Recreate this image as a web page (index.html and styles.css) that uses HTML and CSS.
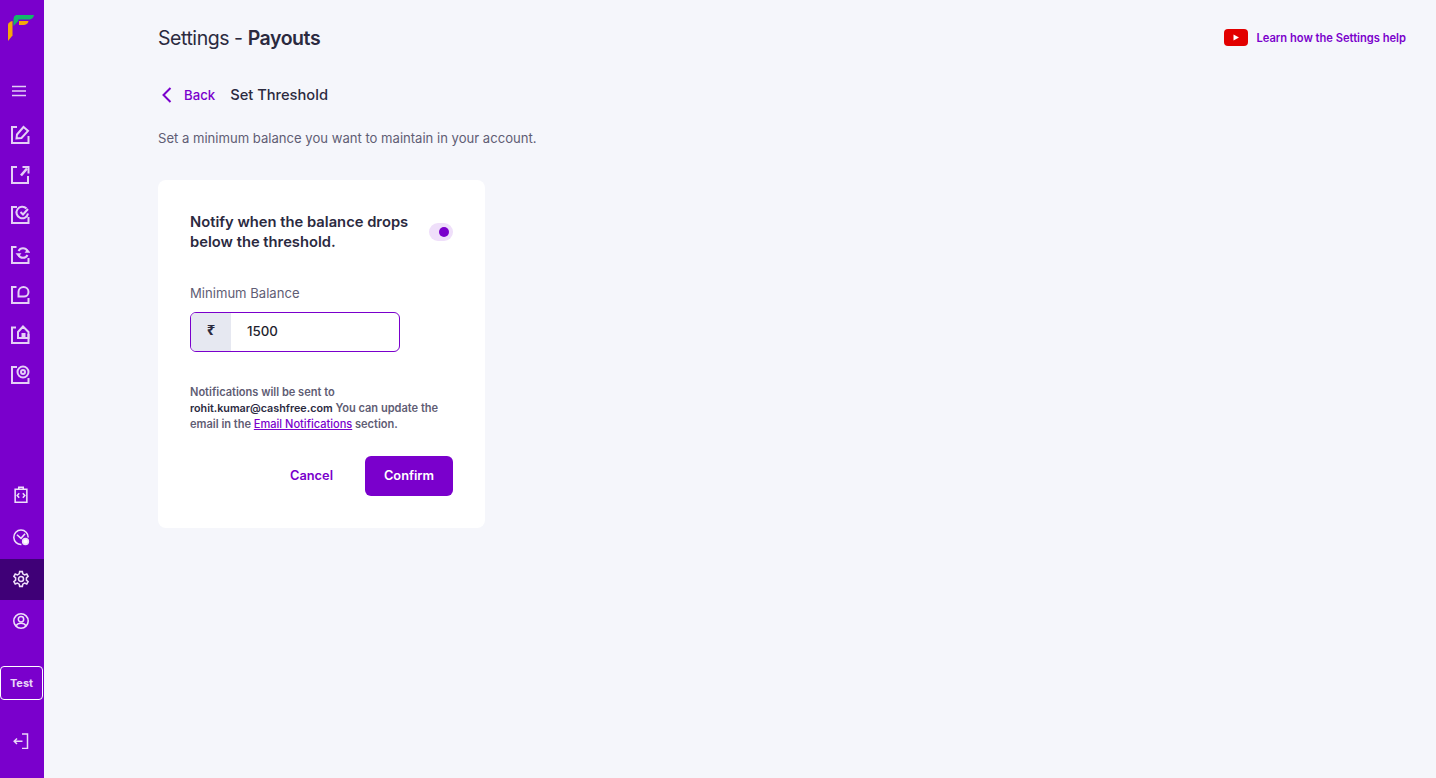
FILE: index.html
```html
<!DOCTYPE html>
<html lang="en">
<head>
<meta charset="utf-8">
<title>Settings - Payouts</title>
<link rel="stylesheet" href="styles.css">
</head>
<body>
<div class="app">
  <aside class="sidebar">
    <div class="logo">
      <svg width="26" height="26" viewBox="0 0 26 26"><path d="M5.500 11V4Q5.500 1 8 0H26Q25.500 3.500 22 4.500H10.300V6Z" fill="#12b76a"/><path d="M0 9.500Q0.500 7 4.500 6V20.500L0 26Z" fill="#f5a70b"/><path d="M11 6H20.500Q20 9.500 16 10H11Z" fill="#f5a70b"/></svg>
    </div>
    <div class="menu-btn">
      <svg width="14" height="12" viewBox="0 0 14 12"><path d="M0 1.500H14M0 6H14M0 10.500H14" stroke="#e4cdf5" stroke-width="1.400"/></svg>
    </div>
    <nav class="nav-top">
      <a class="nav-item"><svg class="nav-icon" viewBox="0 0 20 20"><path d="M7 2H2V18H18.500V11"/><path d="M6.500 13.500L7 9.500L13.500 2L18 5.800L11.500 13Z"/></svg></a>
      <a class="nav-item"><svg class="nav-icon" viewBox="0 0 20 20"><path d="M7 2H2V18H18V11"/><path d="M12.500 2H18.500V8.500"/><path d="M17 3.500L11 10.500" stroke-width="2.600"/></svg></a>
      <a class="nav-item"><svg class="nav-icon" viewBox="0 0 20 20"><path d="M7 2H2V18H18.500V12"/><path d="M16.500 3.500A5.800 5.800 0 1 0 18 8.500"/><path d="M10.500 7L13 9.500L18 4"/></svg></a>
      <a class="nav-item"><svg class="nav-icon" viewBox="0 0 20 20"><path d="M6.500 2H2V18H18.500V13"/><path d="M8.500 6A5 5 0 0 1 17.500 6M17.500 10A5 5 0 0 1 8.500 10"/><path d="M15 7.500H20L17.500 4.500Z" fill="#e4d0f6" stroke-width="0.500"/><path d="M6 8.500H11L8.500 11.500Z" fill="#e4d0f6" stroke-width="0.500"/></svg></a>
      <a class="nav-item"><svg class="nav-icon" viewBox="0 0 20 20"><path d="M6.500 2H2V18H18.500V13"/><path d="M8.500 11.500V7A5 5 0 0 1 18.500 7A4.500 4.500 0 0 1 14 11.500Z"/></svg></a>
      <a class="nav-item"><svg class="nav-icon" viewBox="0 0 20 20"><path d="M6 2.500H2V18H18.500V9"/><path d="M8 13V7L13 1.500L18.500 7V13H14.500V9H12.500V13Z"/></svg></a>
      <a class="nav-item"><svg class="nav-icon" viewBox="0 0 20 20"><path d="M7 2H2V18H18.500V13"/><circle cx="13" cy="7" r="5.500"/><circle cx="13" cy="7" r="2"/></svg></a>
    </nav>
    <nav class="nav-bottom">
      <a class="nav-item-sm"><svg class="nav-icon-sm" viewBox="0 0 20 20"><path d="M3.500 3.500H16.500V18H3.500Z"/><path d="M7.500 3.500V1.500H12.500V3.500"/><path d="M8 8L5.800 10.500L8 13M12 8L14.200 10.500L12 13"/></svg></a>
      <a class="nav-item-sm"><svg class="nav-icon-sm" viewBox="0 0 20 20"><path d="M10.500 18.300A8 8 0 1 1 18 10.500"/><path d="M5.500 7.500L10 11.500L14.500 6.500"/><circle cx="15" cy="15" r="3.200" fill="#fff"/></svg></a>
      <a class="nav-item-sm active"><svg class="nav-icon-sm" viewBox="0 0 20 20"><circle cx="10" cy="10" r="2.800"/><path d="M8.500 1.800H11.500L12 4.300L14 5.400L16.400 4.500L17.900 7L16 8.800V11.200L17.900 13L16.400 15.500L14 14.600L12 15.700L11.500 18.200H8.500L8 15.700L6 14.600L3.600 15.500L2.100 13L4 11.200V8.800L2.100 7L3.600 4.500L6 5.400L8 4.300Z"/></svg></a>
      <a class="nav-item-sm"><svg class="nav-icon-sm" viewBox="0 0 20 20"><circle cx="10" cy="10" r="8"/><circle cx="10" cy="8" r="3"/><path d="M4.500 15.500Q6 12.500 10 12.500T15.500 15.500"/></svg></a>
    </nav>
    <div class="test-badge">Test</div>
    <a class="exit"><svg width="16" height="16" viewBox="0 0 16 16" fill="none" stroke="#e9d8f7" stroke-width="1.500"><path d="M9 1H14.500V15.500H9"/><path d="M1 8.200H9.500M4 5.500L1.200 8.200L4 11"/></svg></a>
  </aside>

  <main class="content">
    <header class="topbar">
      <h1 class="title">Settings - <strong>Payouts</strong></h1>
      <a class="help">
        <svg width="24" height="17" viewBox="0 0 24 17"><rect width="24" height="17" rx="4" fill="#e20000"/><path d="M9.500 5.500L15 8.500L9.500 11.500Z" fill="#fff"/></svg>
        <span>Learn how the Settings help</span>
      </a>
    </header>

    <div class="crumb">
      <a class="back">
        <svg width="10" height="16" viewBox="0 0 10 16" fill="none" stroke="#7a00cc" stroke-width="2"><path d="M8.500 1L1.500 8L8.500 15"/></svg>
        <span>Back</span>
      </a>
      <span class="crumb-title">Set Threshold</span>
    </div>

    <p class="intro">Set a minimum balance you want to maintain in your account.</p>

    <section class="card">
      <div class="notify">
        <div class="notify-text">Notify when the balance drops below the threshold.</div>
        <div class="toggle"><span class="knob"></span></div>
      </div>
      <label class="field-label">Minimum Balance</label>
      <div class="input">
        <span class="prefix">₹</span>
        <span class="value">1500</span>
      </div>
      <p class="note">Notifications will be sent to <b>rohit.kumar@cashfree.com</b> You can update the email in the <a class="note-link">Email Notifications</a> section.</p>
      <div class="actions">
        <button class="btn-text">Cancel</button>
        <button class="btn-primary">Confirm</button>
      </div>
    </section>
  </main>
</div>
</body>
</html>
```
FILE: styles.css
```css
* { box-sizing: border-box; }
html, body { margin: 0; height: 100%; }
body {
  background: #f5f6fb;
  font-family: "Inter", "Liberation Sans", sans-serif;
  color: #2b2a3f;
  overflow: hidden;
}
.app { display: flex; height: 778px; }
.sidebar {
  width: 44px;
  flex: none;
  background: #7a00cc;
  display: flex;
  flex-direction: column;
  align-items: center;
}
.logo { height: 26px; margin-top: 15px; align-self: flex-start; margin-left: 8px; line-height: 0; }
.menu-btn { margin-top: 44px; height: 12px; margin-left: -6px; line-height: 0; }
.nav-top { margin-top: 28px; display: flex; flex-direction: column; gap: 20px; }
.nav-item { display: block; width: 20px; height: 20px; margin-left: -4px; }
.nav-icon { width: 20px; height: 20px; fill: none; stroke: #e4d0f6; stroke-width: 2; display: block; }
.nav-bottom { margin-top: 90px; width: 44px; display: flex; flex-direction: column; }
.nav-item-sm { display: flex; align-items: center; justify-content: center; height: 41px; width: 44px; margin-bottom: 1px; padding: 0 2px 2px 0; }
.nav-item-sm.active { background: #3f0077; }
.nav-icon-sm { width: 18px; height: 18px; fill: none; stroke: #eedffa; stroke-width: 1.700; display: block; }
.test-badge {
  margin-top: 23px;
  width: 43px;
  height: 34px;
  margin-left: -1px;
  border: 1px solid #fff;
  border-radius: 4px;
  color: #e9d8f7;
  font-size: 11px;
  font-weight: 700;
  display: flex;
  align-items: center;
  justify-content: center;
}
.exit { margin-top: 33px; line-height: 0; margin-left: -3px; }

.content { flex: 1; padding: 0 30px 0 114px; min-width: 0; }
.topbar { display: flex; justify-content: space-between; align-items: center; height: 75px; }
.title { margin: 0; font-size: 19.500px; letter-spacing: -0.45px; font-weight: 400; color: #2b2a3f; }
.title strong { font-weight: 600; }
.help { display: flex; align-items: center; gap: 8px; color: #7a00cc; font-size: 11.150px; font-weight: 600; }
.help svg { display: block; }
.crumb { display: flex; align-items: center; height: 39px; }
.back { display: flex; align-items: center; color: #7a00cc; font-size: 13.200px; font-weight: 500; gap: 12px; margin-left: 4px; }
.back svg { display: block; }
.crumb-title { margin-left: 15px; font-size: 14.700px; font-weight: 500; color: #2b2a3f; }
.intro { margin: 14px 0 0; font-size: 13.080px; line-height: 20px; color: #5f5d74; height: 20px; }
.card {
  width: 327px;
  height: 348px;
  margin-top: 32px;
  padding: 32px;
  background: #fff;
  border-radius: 8px;
}
.notify { display: flex; justify-content: space-between; align-items: center; }
.notify-text { width: 236px; font-size: 14.750px; line-height: 20px; font-weight: 600; color: #2b2a3f; }
.toggle {
  width: 24px;
  height: 18px;
  border-radius: 9px;
  background: #efdffa;
  display: flex;
  align-items: center;
  justify-content: flex-end;
  padding-right: 4px;
}
.knob { width: 10px; height: 10px; border-radius: 50%; background: #7a00cc; }
.field-label { display: block; margin-top: 31px; font-size: 13.100px; line-height: 20px; color: #5f5d74; }
.input {
  display: flex;
  width: 210px;
  height: 40px;
  margin-top: 9px;
  border: 1px solid #7a00cc;
  border-radius: 6px;
  overflow: hidden;
  background: #fff;
}
.prefix {
  width: 40px;
  background: #e6e8f1;
  display: flex;
  align-items: center;
  justify-content: center;
  font-family: "Noto Sans", sans-serif;
  font-size: 15px;
  font-weight: 700;
  color: #2b2a3f;
  padding-bottom: 7px;
}
.value { padding-left: 16px; font-size: 13.300px; line-height: 36px; font-weight: 500; color: #1f1e2e; }
.note { margin: 32px 0 0; height: 48px; font-size: 11.050px; line-height: 16px; font-weight: 600; color: #5f5d74; }
.note b { color: #2b2a3f; font-size: 10.750px; line-height: 1; font-weight: 600; }
.note-link { color: #7a00cc; font-weight: 500; text-decoration: underline; }
.actions { display: flex; justify-content: flex-end; align-items: center; margin-top: 24px; gap: 32px; }
.btn-text { background: none; border: 0; padding: 0 0 2px; color: #7a00cc; font: 600 12.800px "Inter", sans-serif; }
.btn-primary {
  width: 88px;
  height: 40px;
  border: 0;
  border-radius: 6px;
  padding: 0 0 2px;
  background: #7a00cc;
  color: #fff;
  font: 600 12.800px "Inter", sans-serif;
}
```
